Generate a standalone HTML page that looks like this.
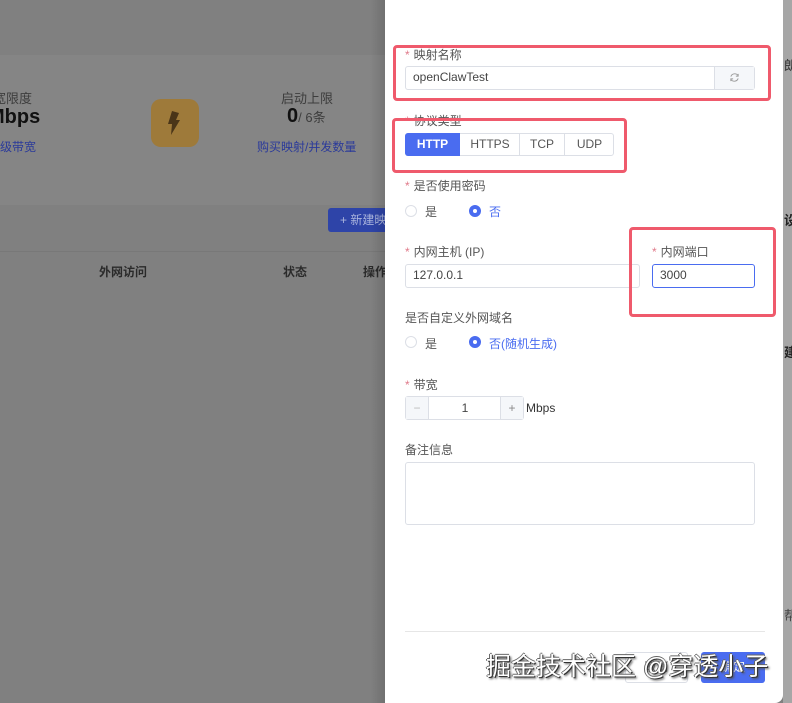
<!DOCTYPE html>
<html><head><meta charset="utf-8">
<style>
*{box-sizing:border-box;margin:0;padding:0}
body{width:792px;height:703px;overflow:hidden;position:relative;background:#808080;font-family:"Liberation Sans","Noto Sans CJK SC",sans-serif;font-size:12px;color:#333}
.a{position:absolute;white-space:nowrap}
.bgc{color:#2a2a2a}
.lab{color:#555;font-size:12px}
.lab b{color:#e07a8a;font-weight:normal;margin-right:4px}
.inp{position:absolute;border:1px solid #dcdfe6;border-radius:3px;background:#fff;padding-left:7px;line-height:20px;color:#444}
.red{position:absolute;border:3px solid #ef5a6c;border-radius:4px}
.rad{position:absolute;width:12px;height:12px;border-radius:50%;border:1px solid #dcdfe6;background:#fff}
.rad.on{border:4px solid #4a6cf0}
</style></head><body>
<div class="a" style="left:0;top:55px;width:385px;height:150px;background:#858585"></div>
<div class="a" style="left:-7px;top:88px;color:#3d3d3d;font-size:13px">宽限度</div>
<div class="a" style="left:-12px;top:106px;color:#111;font-size:20px;font-weight:bold">Mbps</div>
<div class="a" style="left:-12px;top:138px;color:#2b3a9a;font-size:12px">升级带宽</div>
<div class="a" style="left:151px;top:99px;width:48px;height:48px;border-radius:10px;background:#9e7a3a"></div>
<svg class="a" style="left:163px;top:110px" width="22" height="26" viewBox="0 0 22 26"><path d="M9 1 L16 3 L13 10 L17 10 L8 25 L9 14 L5 14 Z" fill="#4a3518"/></svg>
<div class="a" style="left:281px;top:88px;color:#3d3d3d;font-size:13px">启动上限</div>
<div class="a" style="left:287px;top:105px;color:#111;font-size:20px;font-weight:bold">0<span style="font-size:13px;color:#3d3d3d;font-weight:normal">/ 6条</span></div>
<div class="a" style="left:257px;top:138px;color:#2b3a9a;font-size:12px">购买映射/并发数量</div>
<div class="a" style="left:328px;top:208px;width:60px;height:24px;background:#2e44a8;border-radius:3px;color:#aab4dd;line-height:24px;padding-left:12px;font-size:12px">+ 新建映射</div>
<div class="a" style="left:0;top:251px;width:385px;height:1px;background:#787878"></div>
<div class="a bgc" style="left:99px;top:263px;font-weight:bold">外网访问</div>
<div class="a bgc" style="left:283px;top:263px;font-weight:bold">状态</div>
<div class="a bgc" style="left:363px;top:263px;font-weight:bold">操作</div>
<div class="a" style="left:370px;top:0;width:15px;height:703px;background:linear-gradient(90deg,rgba(0,0,0,0),rgba(0,0,0,.12))"></div>
<div class="a" style="left:783px;top:0;width:9px;height:703px;background:#a6a6a6"></div>
<div class="a" style="left:784px;top:55px;color:#333;font-size:13px">朗</div>
<div class="a" style="left:784px;top:210px;color:#222;font-size:13px;font-weight:bold">设</div>
<div class="a" style="left:784px;top:342px;color:#222;font-size:13px;font-weight:bold">建</div>
<div class="a" style="left:784px;top:605px;color:#444;font-size:13px">帮</div>
<div class="a" style="left:385px;top:0;width:398px;height:703px;background:#fff;border-bottom-right-radius:8px"></div>
<div class="a lab" style="left:405px;top:46px"><b>*</b>映射名称</div>
<div class="inp" style="left:405px;top:66px;width:350px;height:24px">openClawTest</div>
<div class="a" style="left:714px;top:67px;width:40px;height:22px;background:#f5f7fa;border-left:1px solid #dcdfe6"></div>
<svg class="a" style="left:729px;top:72px" width="11" height="11" viewBox="0 0 12 12" fill="none" stroke="#999" stroke-width="1"><path d="M10 4 A4.5 4.5 0 0 0 2 5 M2 8 A4.5 4.5 0 0 0 10 7"/><path d="M10 2 V4.5 H7.5 M2 10 V7.5 H4.5"/></svg>
<div class="a lab" style="left:405px;top:112px"><b>*</b>协议类型</div>
<div class="a" style="left:405px;top:133px;width:209px;height:23px;border:1px solid #dcdfe6;border-radius:3px"></div>
<div class="a" style="left:405px;top:133px;width:55px;height:23px;background:#4a6cf0;border-radius:3px 0 0 3px;color:#fff;text-align:center;line-height:23px;font-weight:bold">HTTP</div>
<div class="a" style="left:460px;top:133px;width:60px;height:23px;text-align:center;line-height:23px;color:#555">HTTPS</div>
<div class="a" style="left:519px;top:133px;width:1px;height:23px;background:#dcdfe6"></div>
<div class="a" style="left:520px;top:133px;width:44px;height:23px;text-align:center;line-height:23px;color:#555">TCP</div>
<div class="a" style="left:564px;top:133px;width:1px;height:23px;background:#dcdfe6"></div>
<div class="a" style="left:565px;top:133px;width:49px;height:23px;text-align:center;line-height:23px;color:#555">UDP</div>
<div class="a lab" style="left:405px;top:177px"><b>*</b>是否使用密码</div>
<div class="rad" style="left:405px;top:205px"></div><div class="a" style="left:425px;top:203px;color:#555">是</div>
<div class="rad on" style="left:469px;top:205px"></div><div class="a" style="left:489px;top:203px;color:#4a6cf0">否</div>
<div class="a lab" style="left:405px;top:243px"><b>*</b>内网主机 (IP)</div>
<div class="inp" style="left:405px;top:264px;width:235px;height:24px">127.0.0.1</div>
<div class="a lab" style="left:652px;top:243px"><b>*</b>内网端口</div>
<div class="inp" style="left:652px;top:264px;width:103px;height:24px;border-color:#4a6cf0">3000</div>
<div class="a lab" style="left:405px;top:309px">是否自定义外网域名</div>
<div class="rad" style="left:405px;top:336px"></div><div class="a" style="left:425px;top:335px;color:#555">是</div>
<div class="rad on" style="left:469px;top:336px"></div><div class="a" style="left:489px;top:335px;color:#4a6cf0">否(随机生成)</div>
<div class="a lab" style="left:405px;top:376px"><b>*</b>带宽</div>
<div class="a" style="left:405px;top:396px;width:119px;height:24px;border:1px solid #dcdfe6;border-radius:3px"></div>
<div class="a" style="left:406px;top:397px;width:23px;height:22px;background:#f5f7fa;border-right:1px solid #dcdfe6;color:#bbb;text-align:center;line-height:22px">−</div>
<div class="a" style="left:429px;top:397px;width:72px;height:22px;text-align:center;line-height:22px;color:#444">1</div>
<div class="a" style="left:500px;top:397px;width:23px;height:22px;background:#f5f7fa;border-left:1px solid #dcdfe6;color:#888;text-align:center;line-height:22px">+</div>
<div class="a" style="left:526px;top:401px;color:#333;font-size:12px">Mbps</div>
<div class="a lab" style="left:405px;top:441px">备注信息</div>
<div class="inp" style="left:405px;top:462px;width:350px;height:63px"></div>
<div class="a" style="left:405px;top:631px;width:360px;height:1px;background:#e6e6e6"></div>
<div class="a" style="left:625px;top:652px;width:63px;height:31px;border:1px solid #dcdfe6;border-radius:3px;color:#555;text-align:center;line-height:29px">取消</div>
<div class="a" style="left:701px;top:652px;width:64px;height:31px;background:#4a6cf0;border-radius:3px;color:#fff;text-align:center;line-height:31px">确定</div>
<div class="a" style="left:486px;top:652px;font-size:25px;line-height:30px;color:#fff;text-shadow:1px 1px 0 #333,-1px 0 0 #666,0 -1px 0 #666,2px 2px 2px #555">掘金技术社区 @穿透小子</div>
<div class="red" style="left:393px;top:45px;width:378px;height:56px"></div>
<div class="red" style="left:392px;top:118px;width:235px;height:55px"></div>
<div class="red" style="left:629px;top:227px;width:147px;height:90px"></div>
</body></html>
